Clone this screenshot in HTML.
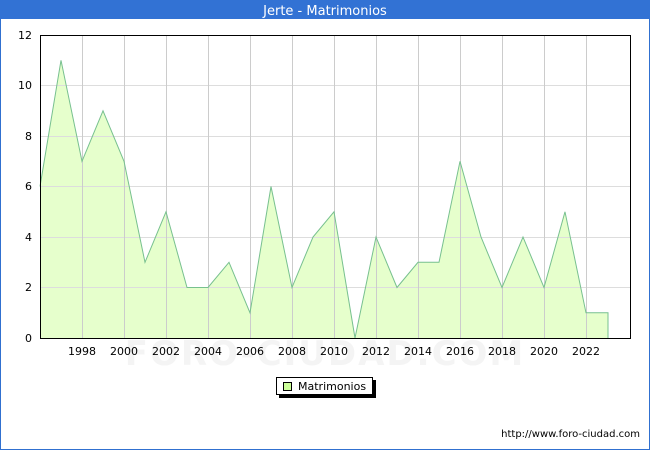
<!DOCTYPE html>
<html><head><style>
body{margin:0;width:650px;height:450px;overflow:hidden;font-family:"DejaVu Sans","Liberation Sans",sans-serif;}
</style></head><body>
<svg width="650" height="450" xmlns="http://www.w3.org/2000/svg" font-family="DejaVu Sans, Liberation Sans, sans-serif">
<rect x="0" y="0" width="650" height="450" fill="#fff"/>
<rect x="0.5" y="0.5" width="649" height="449" fill="none" stroke="#3070d0"/>
<rect x="0" y="0" width="650" height="19" fill="#3272d4"/>
<text x="325" y="15" fill="#fff" font-size="13" text-anchor="middle">Jerte - Matrimonios</text>
<text x="325" y="365" font-size="34" fill="#f4f4f4" text-anchor="middle" font-weight="bold" letter-spacing="2">FORO-CIUDAD.COM</text>
<polygon fill="#e6ffcc" stroke="none" points="40,338 40,186.5 61,60.3 82,161.3 103,110.8 124,161.3 145,262.3 166,211.8 187,287.5 208,287.5 229,262.3 250,312.8 271,186.5 292,287.5 313,237 334,211.8 355,338 376,237 397,287.5 418,262.3 439,262.3 460,161.3 481,237 502,287.5 523,237 544,287.5 565,211.8 586,312.8 608,312.8 608,338"/>
<g stroke="#dddddd" stroke-width="1">
<line x1="40" y1="287.5" x2="630" y2="287.5"/><line x1="40" y1="237.5" x2="630" y2="237.5"/><line x1="40" y1="186.5" x2="630" y2="186.5"/><line x1="40" y1="136.5" x2="630" y2="136.5"/><line x1="40" y1="85.5" x2="630" y2="85.5"/>
</g>
<g stroke="#cccccc" stroke-width="1">
<line x1="82.5" y1="35" x2="82.5" y2="338"/><line x1="124.5" y1="35" x2="124.5" y2="338"/><line x1="166.5" y1="35" x2="166.5" y2="338"/><line x1="208.5" y1="35" x2="208.5" y2="338"/><line x1="250.5" y1="35" x2="250.5" y2="338"/><line x1="292.5" y1="35" x2="292.5" y2="338"/><line x1="334.5" y1="35" x2="334.5" y2="338"/><line x1="376.5" y1="35" x2="376.5" y2="338"/><line x1="418.5" y1="35" x2="418.5" y2="338"/><line x1="460.5" y1="35" x2="460.5" y2="338"/><line x1="502.5" y1="35" x2="502.5" y2="338"/><line x1="544.5" y1="35" x2="544.5" y2="338"/><line x1="586.5" y1="35" x2="586.5" y2="338"/>
</g>
<polyline fill="none" stroke="#77c08f" stroke-width="1" points="40,186.5 61,60.3 82,161.3 103,110.8 124,161.3 145,262.3 166,211.8 187,287.5 208,287.5 229,262.3 250,312.8 271,186.5 292,287.5 313,237 334,211.8 355,338 376,237 397,287.5 418,262.3 439,262.3 460,161.3 481,237 502,287.5 523,237 544,287.5 565,211.8 586,312.8 608,312.8 608,338"/>
<rect x="40.5" y="35.5" width="590" height="303" fill="none" stroke="#000"/>
<g font-size="11" fill="#000" text-anchor="end">
<text x="32" y="342">0</text><text x="32" y="291">2</text><text x="32" y="241">4</text><text x="32" y="190">6</text><text x="32" y="140">8</text><text x="32" y="89">10</text><text x="32" y="39">12</text>
</g>
<g font-size="11" fill="#000" text-anchor="middle">
<text x="82" y="355">1998</text><text x="124" y="355">2000</text><text x="166" y="355">2002</text><text x="208" y="355">2004</text><text x="250" y="355">2006</text><text x="292" y="355">2008</text><text x="334" y="355">2010</text><text x="376" y="355">2012</text><text x="418" y="355">2014</text><text x="460" y="355">2016</text><text x="502" y="355">2018</text><text x="544" y="355">2020</text><text x="586" y="355">2022</text>
</g>
<rect x="279" y="380" width="97" height="18" fill="#000"/>
<rect x="276.5" y="377.5" width="96" height="17" fill="#fff" stroke="#000"/>
<rect x="283.5" y="382.5" width="8" height="8" fill="#ccff99" stroke="#000"/>
<text x="298" y="390" font-size="11">Matrimonios</text>
<text x="640" y="437" font-size="10" text-anchor="end">http://www.foro-ciudad.com</text>
</svg>
</body></html>
